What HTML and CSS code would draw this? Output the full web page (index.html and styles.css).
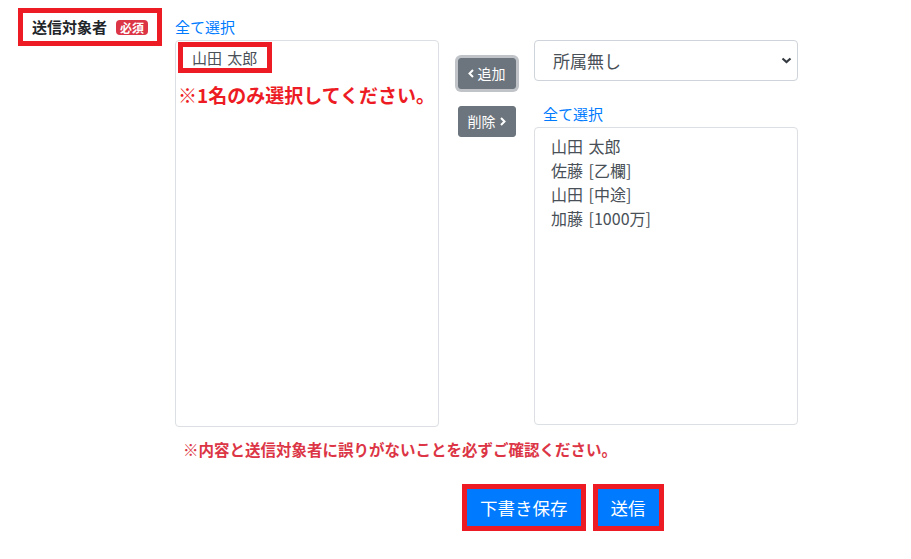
FILE: index.html
```html
<!DOCTYPE html>
<html>
<head>
    <title>送信対象者</title>
    <link rel="stylesheet" href="styles.css">
</head>
<body>
    <div class="form-row">
        <div class="label-col">
            <div class="label-box">
                <span class="label-text">送信対象者</span>
                <span class="badge">必須</span>
            </div>
        </div>

        <div class="main-col">
            <div class="picker">
                <div class="list-col left">
                    <a class="select-all" href="#">全て選択</a>
                    <div class="listbox tall">
                        <div class="option marked">山田 太郎</div>
                        <p class="list-note">※1名のみ選択してください。</p>
                    </div>
                </div>

                <div class="move-col">
                    <button class="btn-move focused">
                        <svg width="6" height="9" viewBox="0 0 6 9"><path d="M5 1 L1.5 4.5 L5 8" fill="none" stroke="#fff" stroke-width="2"/></svg>
                        追加
                    </button>
                    <button class="btn-move">
                        削除
                        <svg width="6" height="9" viewBox="0 0 6 9"><path d="M1 1 L4.5 4.5 L1 8" fill="none" stroke="#fff" stroke-width="2"/></svg>
                    </button>
                </div>

                <div class="list-col right">
                    <div class="select-box">
                        <span>所属無し</span>
                        <svg width="11" height="7" viewBox="0 0 11 7"><path d="M1.5 1.5 L5.5 5 L9.5 1.5" fill="none" stroke="#343a40" stroke-width="2.2"/></svg>
                    </div>
                    <a class="select-all" href="#">全て選択</a>
                    <div class="listbox short">
                        <div class="option">山田 太郎</div>
                        <div class="option">佐藤 [乙欄]</div>
                        <div class="option">山田 [中途]</div>
                        <div class="option">加藤 [1000万]</div>
                    </div>
                </div>
            </div>

            <p class="warning">※内容と送信対象者に誤りがないことを必ずご確認ください。</p>

            <div class="actions">
                <div class="marker"><button class="btn-primary">下書き保存</button></div>
                <div class="marker"><button class="btn-primary">送信</button></div>
            </div>
        </div>
    </div>
</body>
</html>
```

FILE: styles.css
```css
body {
    margin: 0;
    font-family: "Noto Sans CJK JP", "Noto Sans", sans-serif;
    color: #212529;
    background-color: #fff;
}

.form-row {
    display: flex;
    padding: 8px 0 0 18px;
}

.label-col {
    width: 157px;
    flex-shrink: 0;
}

.label-box {
    display: flex;
    align-items: center;
    justify-content: space-between;
    box-sizing: border-box;
    width: 144px;
    height: 38px;
    border: 5px solid #ed1c24;
    padding: 0 9px;
}

.label-text {
    font-size: 15px;
    font-weight: bold;
    line-height: 20px;
}

.badge {
    background-color: #dc3545;
    color: #fff;
    font-size: 12px;
    font-weight: bold;
    line-height: 15px;
    padding: 0 4px;
    border-radius: 4px;
}

.picker {
    display: flex;
}

.list-col {
    width: 264px;
    display: flex;
    flex-direction: column;
}

.list-col.left {
    padding-top: 8px;
}

.list-col.right {
    padding-top: 32px;
}

.select-all {
    color: #007bff;
    text-decoration: none;
    font-size: 15px;
    line-height: 22px;
    margin-bottom: 2px;
}

.list-col.right .select-all {
    margin-top: 22px;
    padding-left: 9px;
}

.listbox {
    border: 1px solid #dcdfe3;
    border-radius: 4px;
    box-sizing: border-box;
}

.listbox.tall {
    height: 387px;
    padding: 1px 2px;
}

.listbox.short {
    height: 298px;
    padding: 6px 16px;
}

.option {
    color: #495057;
    font-size: 16px;
    line-height: 24px;
    word-spacing: 2px;
}

.option.marked {
    display: inline-block;
    font-size: 15px;
    line-height: 21px;
    border: 5px solid #ed1c24;
    padding: 0 10px 0 9px;
}

.list-note {
    margin: 11px 0 0;
    color: #ed1c24;
    font-size: 19px;
    font-weight: bold;
    line-height: 22px;
}

.move-col {
    width: 95px;
    display: flex;
    flex-direction: column;
    align-items: center;
    gap: 17px;
    padding-top: 50px;
}

.btn-move {
    display: flex;
    align-items: center;
    gap: 4px;
    background-color: #6c757d;
    border: 1px solid #6c757d;
    border-radius: 3px;
    color: #fff;
    font-family: inherit;
    font-size: 14px;
    line-height: 21px;
    padding: 4px 9px;
    height: 31px;
}

.btn-move.focused {
    box-shadow: 0 0 0 3px rgba(130, 138, 145, 0.5);
}

.select-box {
    display: flex;
    align-items: center;
    justify-content: space-between;
    height: 41px;
    box-sizing: border-box;
    border: 1px solid #ced4da;
    border-radius: 4px;
    padding: 0 5px 0 18px;
    color: #495057;
    font-size: 17px;
}

.warning {
    margin: 11px 0 0;
    padding-left: 8px;
    color: #dc3545;
    font-size: 15.5px;
    font-weight: bold;
    line-height: 22px;
}

.actions {
    display: flex;
    gap: 7px;
    margin-top: 24px;
    padding-left: 287px;
}

.marker {
    border: 5px solid #ed1c24;
    display: flex;
}

.btn-primary {
    background-color: #007bff;
    border: 1px solid #007bff;
    border-radius: 0;
    color: #fff;
    font-family: inherit;
    font-size: 17.5px;
    line-height: 25px;
    padding: 5px 12px;
}
```
